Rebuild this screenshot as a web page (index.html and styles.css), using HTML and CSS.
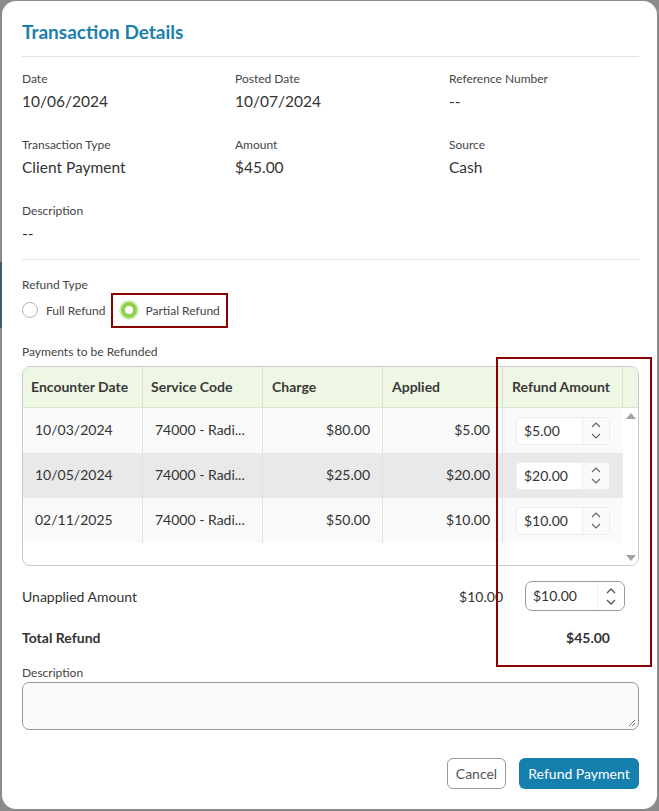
FILE: index.html
```html
<!DOCTYPE html>
<html>
<head>
<meta charset="utf-8">
<link rel="stylesheet" href="styles.css">
</head>
<body>
<div class="backdrop-band"></div>
<div class="modal">
  <div class="modal-header"><h1 class="title">Transaction Details</h1></div>

  <div class="info-grid">
    <div class="field"><div class="label">Date</div><div class="value">10/06/2024</div></div>
    <div class="field"><div class="label">Posted Date</div><div class="value">10/07/2024</div></div>
    <div class="field"><div class="label">Reference Number</div><div class="value">--</div></div>
    <div class="field"><div class="label">Transaction Type</div><div class="value">Client Payment</div></div>
    <div class="field"><div class="label">Amount</div><div class="value">$45.00</div></div>
    <div class="field"><div class="label">Source</div><div class="value">Cash</div></div>
    <div class="field"><div class="label">Description</div><div class="value">--</div></div>
  </div>

  <div class="section">
    <div class="label">Refund Type</div>
    <div class="radio-row">
      <label class="radio"><span class="circle"></span>Full Refund</label>
      <label class="radio selected"><span class="circle checked"></span>Partial Refund</label>
    </div>
    <div class="label payments-label">Payments to be Refunded</div>

    <div class="grid-table">
      <div class="thead">
        <div class="th">Encounter Date</div>
        <div class="th">Service Code</div>
        <div class="th">Charge</div>
        <div class="th">Applied</div>
        <div class="th">Refund Amount</div>
        <div class="th th-gap"></div>
      </div>
      <div class="tbody">
        <div class="rows">
          <div class="tr">
            <div class="td">10/03/2024</div>
            <div class="td">74000 - Radi...</div>
            <div class="td num">$80.00</div>
            <div class="td num">$5.00</div>
            <div class="td spin-cell"><div class="spin"><span class="spin-val">$5.00</span><span class="spin-btns"><svg width="12" height="8" viewBox="0 0 12 8"><polyline points="2,6 6,2 10,6" fill="none" stroke="#666" stroke-width="1.2"/></svg><svg width="12" height="8" viewBox="0 0 12 8"><polyline points="2,2 6,6 10,2" fill="none" stroke="#666" stroke-width="1.2"/></svg></span></div></div>
          </div>
          <div class="tr alt">
            <div class="td">10/05/2024</div>
            <div class="td">74000 - Radi...</div>
            <div class="td num">$25.00</div>
            <div class="td num">$20.00</div>
            <div class="td spin-cell"><div class="spin"><span class="spin-val">$20.00</span><span class="spin-btns"><svg width="12" height="8" viewBox="0 0 12 8"><polyline points="2,6 6,2 10,6" fill="none" stroke="#666" stroke-width="1.2"/></svg><svg width="12" height="8" viewBox="0 0 12 8"><polyline points="2,2 6,6 10,2" fill="none" stroke="#666" stroke-width="1.2"/></svg></span></div></div>
          </div>
          <div class="tr">
            <div class="td">02/11/2025</div>
            <div class="td">74000 - Radi...</div>
            <div class="td num">$50.00</div>
            <div class="td num">$10.00</div>
            <div class="td spin-cell"><div class="spin"><span class="spin-val">$10.00</span><span class="spin-btns"><svg width="12" height="8" viewBox="0 0 12 8"><polyline points="2,6 6,2 10,6" fill="none" stroke="#666" stroke-width="1.2"/></svg><svg width="12" height="8" viewBox="0 0 12 8"><polyline points="2,2 6,6 10,2" fill="none" stroke="#666" stroke-width="1.2"/></svg></span></div></div>
          </div>
        </div>
        <div class="scrollbar">
          <svg width="10" height="8" viewBox="0 0 10 8"><polygon points="0,7 5,1 10,7" fill="#a3a3a3"/></svg>
          <svg width="10" height="8" viewBox="0 0 10 8"><polygon points="0,1 5,7 10,1" fill="#a3a3a3"/></svg>
        </div>
      </div>
    </div>

    <div class="sum-row">
      <div class="sum-label">Unapplied Amount</div>
      <div class="sum-amount">$10.00</div>
      <div class="spin spin-outlined"><span class="spin-val">$10.00</span><span class="spin-btns"><svg width="12" height="8" viewBox="0 0 12 8"><polyline points="2,6 6,2 10,6" fill="none" stroke="#555" stroke-width="1.3"/></svg><svg width="12" height="8" viewBox="0 0 12 8"><polyline points="2,2 6,6 10,2" fill="none" stroke="#555" stroke-width="1.3"/></svg></span></div>
    </div>
    <div class="total-row">
      <div class="total-label">Total Refund</div>
      <div class="total-amount">$45.00</div>
    </div>

    <div class="label desc-label">Description</div>
    <div class="textarea"><svg class="grip" width="8" height="8" viewBox="0 0 8 8"><line x1="7" y1="1" x2="1" y2="7" stroke="#777" stroke-width="1"/><line x1="7" y1="4" x2="4" y2="7" stroke="#777" stroke-width="1"/></svg></div>

    <div class="actions">
      <button class="btn btn-cancel">Cancel</button>
      <button class="btn btn-primary">Refund Payment</button>
    </div>
  </div>

  <div class="highlight hl-radio"></div>
  <div class="highlight hl-column"></div>
</div>
</body>
</html>
```

FILE: styles.css
```css
* { box-sizing: border-box; }
html, body { margin: 0; padding: 0; }
body {
  background: #8b8b8b;
  font-family: Lato, "Open Sans", Arial, sans-serif;
  color: #333;
  width: 659px;
  height: 811px;
  overflow: hidden;
  position: relative;
}
.backdrop-band {
  position: absolute;
  left: 0; top: 262px;
  width: 4px; height: 66px;
  background: #3b5d74;
}
.modal {
  position: relative;
  margin: 1px 2px 0 2px;
  width: 655px;
  height: 808px;
  background: #fff;
  border-radius: 14px;
  padding: 0 18px 0 20px;
}
.modal-header {
  padding: 20px 0 13px;
  border-bottom: 1px solid #e3e3e3;
}
.title {
  margin: 0;
  font-size: 19px;
  line-height: 22px;
  font-weight: 700;
  color: #1b7fae;
}
.info-grid {
  display: grid;
  grid-template-columns: 213px 214px 1fr;
  row-gap: 26px;
  padding: 14px 0 16px;
  border-bottom: 1px solid #e3e3e3;
}
.label {
  font-size: 12px;
  line-height: 16px;
  color: #444;
}
.value {
  margin-top: 4px;
  font-size: 15.5px;
  line-height: 20px;
  color: #333;
}
.section { padding-top: 17px; }
.radio-row {
  display: flex;
  align-items: center;
  height: 34px;
}
.radio {
  display: flex;
  align-items: center;
  font-size: 12px;
  color: #444;
}
.radio .circle {
  width: 16px; height: 16px;
  border-radius: 50%;
  border: 1px solid #b5b5b5;
  margin-right: 8px;
  background: #fff;
}
.radio + .radio { margin-left: 16px; }
.circle.checked {
  border: 4px solid #8fd04f;
  background: #fff;
  box-shadow: 0 0 0 2px rgba(160, 220, 110, 0.45);
}
.payments-label { margin-top: 17px; }
.grid-table {
  margin-top: 6px;
  width: 617px;
  height: 200px;
  border: 1px solid #c9c9c9;
  border-radius: 8px;
  overflow: hidden;
  background: #fff;
}
.thead {
  display: grid;
  grid-template-columns: 120px 120px 120px 120px 120px 15px;
  height: 41px;
  background: #eef7e4;
  border-bottom: 1px solid #d7e8c6;
}
.th {
  font-size: 14px;
  font-weight: 700;
  color: #3a3a3a;
  padding: 0 8px;
  line-height: 40px;
  border-right: 1px solid #d9e3cf;
  white-space: nowrap;
}
.th:nth-child(3), .th:nth-child(4), .th:nth-child(5) { padding-left: 9px; }
.th-gap { border-right: none; padding: 0; }
.tbody {
  display: flex;
  height: 157px;
}
.rows { width: 600px; }
.tr {
  display: grid;
  grid-template-columns: 120px 120px 120px 120px 120px;
  height: 45px;
  background: #fafafa;
}
.tr.alt { background: #e9e9e9; }
.td {
  font-size: 14px;
  color: #333;
  line-height: 44px;
  padding: 0 12px;
  border-right: 1px solid #e2e2e2;
  white-space: nowrap;
}
.td.num { text-align: right; padding-right: 12px; }
.td.spin-cell {
  border-right: none;
  padding: 0 0 0 13px;
  display: flex;
  align-items: center;
}
.spin {
  display: flex;
  align-items: stretch;
  width: 94px;
  height: 28px;
  background: #fff;
  border: 1px solid #ececec;
  border-radius: 4px;
}
.spin-val {
  flex: 1;
  font-size: 14px;
  line-height: 26px;
  padding-left: 7px;
  color: #333;
}
.spin-btns {
  width: 27px;
  display: flex;
  flex-direction: column;
  align-items: center;
  justify-content: center;
  gap: 3px;
  border-left: 1px solid #efefef;
  background: #fafafa;
}
.scrollbar {
  width: 15px;
  display: flex;
  flex-direction: column;
  justify-content: space-between;
  align-items: center;
  padding: 4px 0 3px;
  background: #fff;
}
.sum-row {
  margin-top: 15px;
  display: flex;
  align-items: center;
  height: 30px;
}
.sum-label { font-size: 14px; color: #333; width: 400px; }
.sum-amount { font-size: 14px; color: #333; width: 81px; text-align: right; }
.spin-outlined {
  margin-left: 22px;
  width: 100px;
  height: 30px;
  border: 1px solid #9a9a9a;
  border-radius: 7px;
}
.spin-outlined .spin-val { line-height: 28px; padding-left: 7px; }
.spin-outlined .spin-btns { background: #fff; border-left: 1px solid #eee; border-radius: 0 7px 7px 0; }
.total-row {
  margin-top: 16px;
  display: flex;
  align-items: center;
  height: 20px;
}
.total-label { font-size: 14px; font-weight: 700; color: #333; width: 400px; }
.total-amount { font-size: 14px; font-weight: 700; color: #333; width: 188px; text-align: right; }
.desc-label { margin-top: 18px; }
.textarea {
  position: relative;
  margin-top: 1px;
  width: 617px;
  height: 48px;
  border: 1px solid #999;
  border-radius: 7px;
  background: #fafafa;
}
.grip { position: absolute; right: 2px; bottom: 2px; }
.actions {
  margin-top: 28px;
  display: flex;
  justify-content: flex-end;
  gap: 13px;
}
.btn {
  font-family: Lato, "Open Sans", Arial, sans-serif;
  font-size: 14px;
  height: 31px;
  border-radius: 6px;
  cursor: pointer;
}
.btn-cancel {
  width: 59px;
  background: #fff;
  border: 1px solid #9a9a9a;
  color: #555;
}
.btn-primary {
  width: 120px;
  background: #157fad;
  border: none;
  color: #fff;
}
.highlight {
  position: absolute;
  border: 2px solid #8b0000;
  pointer-events: none;
}
.hl-radio { left: 109px; top: 292px; width: 117px; height: 35px; }
.hl-column { left: 494px; top: 356px; width: 156px; height: 310px; }
```
